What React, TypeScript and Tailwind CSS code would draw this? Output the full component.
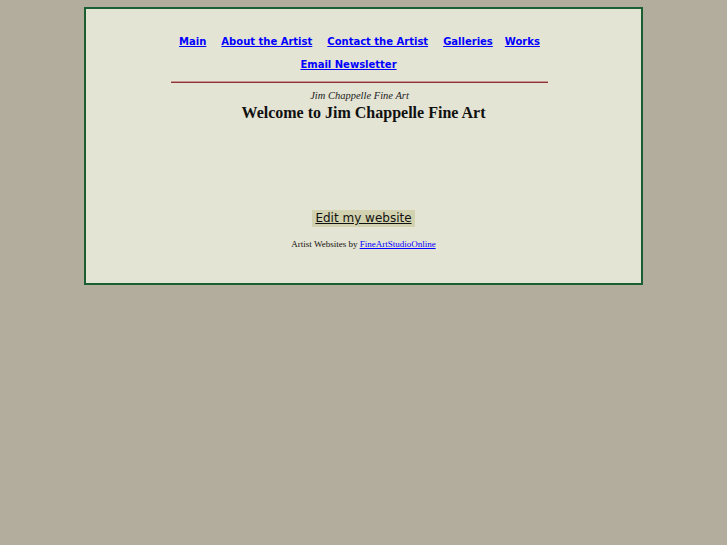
export default function App() {
  const links = [
    { t: "Main", m: "" },
    { t: "About the Artist", m: "ml-[15px]" },
    { t: "Contact the Artist", m: "ml-[15px]" },
    { t: "Galleries", m: "ml-[15px]" },
    { t: "Works", m: "ml-[12px]" },
  ];
  return (
    <div className="min-h-[545px] bg-[#b3ad9d] pt-[7px]">
      <div className="ml-[84px] w-[559px] h-[278px] border-2 border-[#1b5e31] bg-[#e4e4d4] flex flex-col items-center">
        <div className="mt-[21px] mr-[8px] w-[400px] text-center font-['DejaVu_Sans',sans-serif] text-[10px] font-bold leading-[23px]">
          <div className="flex justify-center">
            {links.map((l) => (
              <a key={l.t} href="#" className={`text-[#0000ff] underline ${l.m}`}>
                {l.t}
              </a>
            ))}
          </div>
          <div className="pr-[22px]">
            <a href="#" className="text-[#0000ff] underline">
              Email Newsletter
            </a>
          </div>
        </div>
        <div className="mt-[5px] mr-[8px] w-[377px] h-[2px] border-t border-[#c89494] border-b border-b-[#8e3434]" />
        <div className="mt-[6px] mr-[8px] font-['Liberation_Serif',serif] italic text-[10.5px] leading-[13px] text-[#222]">
          Jim Chappelle Fine Art
        </div>
        <div className="mt-[1px] font-['Liberation_Serif',serif] font-bold text-[16px] leading-[19px] text-[#111]">
          Welcome to Jim Chappelle Fine Art
        </div>
        <div className="mt-[88px] bg-[#d2d2b0] px-[3px] h-[17px] leading-[17px] font-['DejaVu_Sans',sans-serif] text-[12px] text-[#111] underline">
          Edit my website
        </div>
        <div className="mt-[12px] font-['Liberation_Serif',serif] text-[9px] leading-[11px] text-[#111]">
          Artist Websites by{" "}
          <a href="#" className="text-[#0000ff] underline">
            FineArtStudioOnline
          </a>
        </div>
      </div>
    </div>
  );
}
